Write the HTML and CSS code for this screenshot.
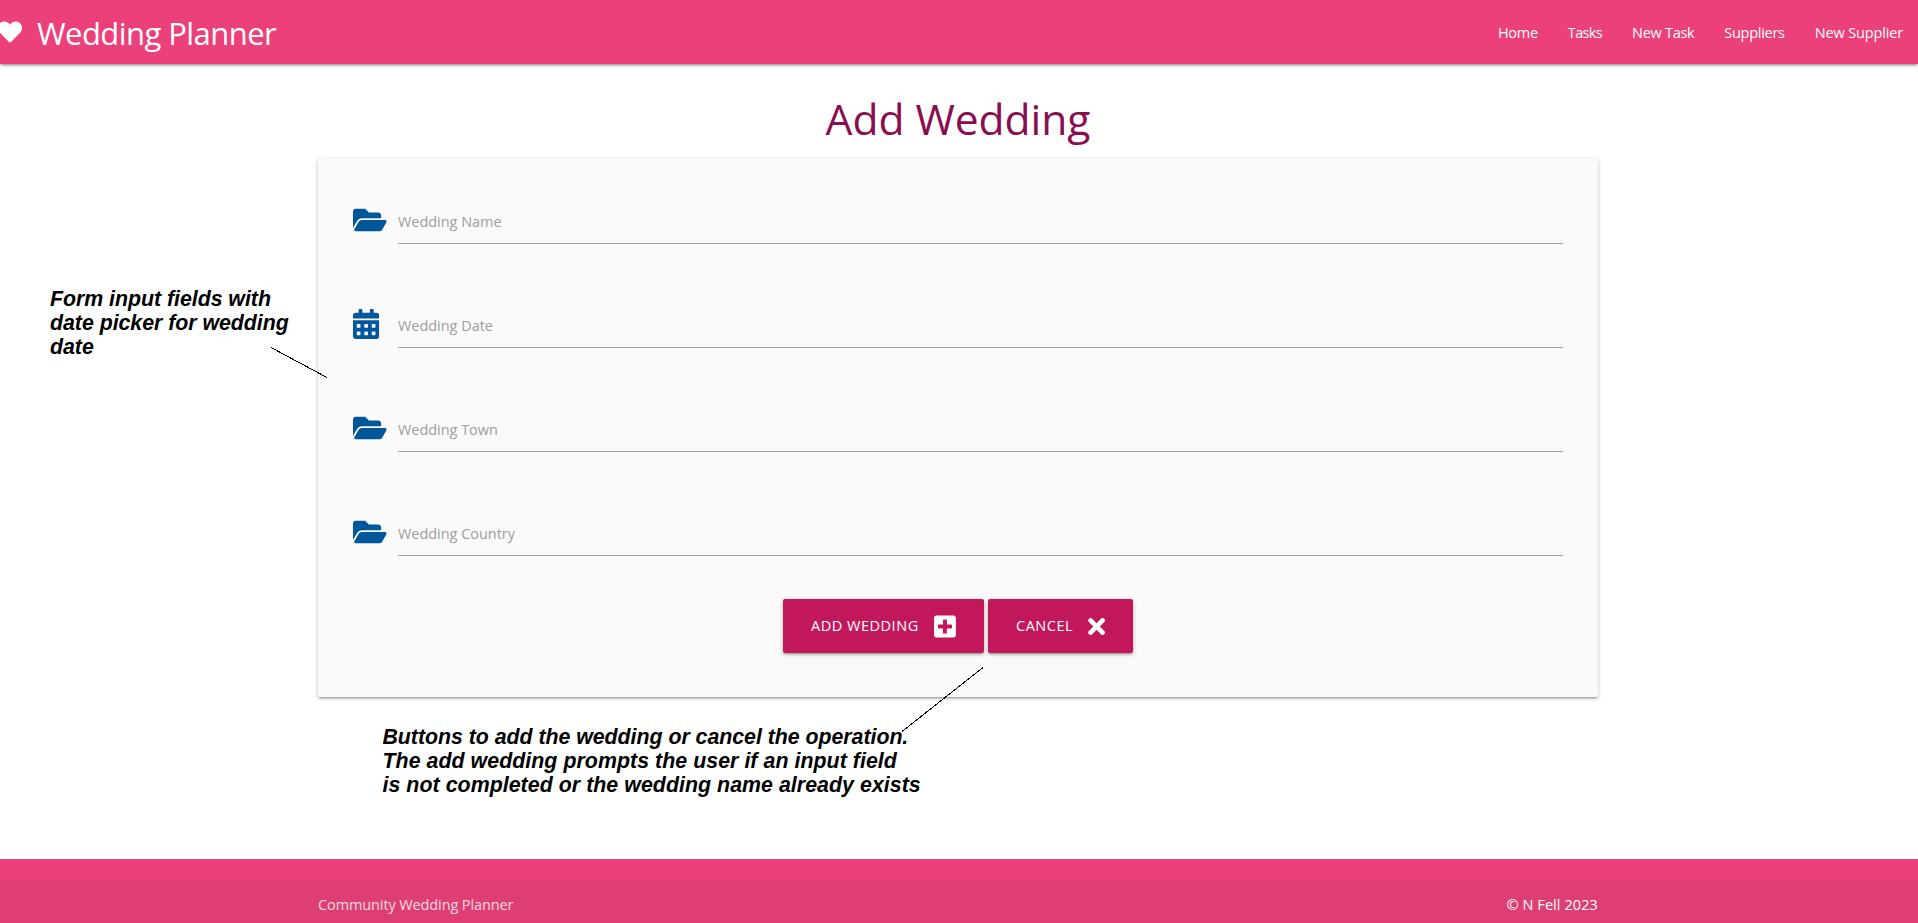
FILE: index.html
```html
<!DOCTYPE html>
<html lang="en">
<head>
<meta charset="utf-8">
<title>Wedding Planner</title>
<link rel="stylesheet" href="styles.css">
</head>
<body>
<svg class="sprite" aria-hidden="true">
  <symbol id="heart" viewBox="0 0 512 512"><path d="M462.3 62.6C407.5 15.9 326 24.3 275.7 76.2L256 96.5l-19.7-20.3C186.1 24.3 104.5 15.9 49.7 62.6c-62.8 53.6-66.1 149.8-9.9 207.9l193.5 199.8c12.5 12.9 32.8 12.9 45.3 0l193.5-199.8c56.3-58.1 53-154.3-9.8-207.9z"/></symbol>
  <symbol id="folder" viewBox="0 0 576 512"><path d="M572.694 292.093L500.27 416.248A63.997 63.997 0 0 1 444.989 448H45.025c-18.523 0-30.064-20.093-20.731-36.093l72.424-124.155A64 64 0 0 1 152 256h399.964c18.523 0 30.064 20.093 20.73 36.093zM152 224h328v-48c0-26.51-21.49-48-48-48H272l-64-64H48C21.49 64 0 85.49 0 112v278.046l69.077-118.418C86.214 242.25 117.989 224 152 224z"/></symbol>
  <symbol id="calendar" viewBox="0 0 448 512"><path fill-rule="evenodd" d="M0 464c0 26.5 21.5 48 48 48h352c26.5 0 48-21.5 48-48V192H0zM76 256h40q12 0 12 12v40q0 12-12 12H76q-12 0-12-12v-40q0-12 12-12zM204 256h40q12 0 12 12v40q0 12-12 12h-40q-12 0-12-12v-40q0-12 12-12zM332 256h40q12 0 12 12v40q0 12-12 12h-40q-12 0-12-12v-40q0-12 12-12zM76 384h40q12 0 12 12v40q0 12-12 12H76q-12 0-12-12v-40q0-12 12-12zM204 384h40q12 0 12 12v40q0 12-12 12h-40q-12 0-12-12v-40q0-12 12-12zM332 384h40q12 0 12 12v40q0 12-12 12h-40q-12 0-12-12v-40q0-12 12-12zM400 64h-48V16c0-8.800-7.200-16-16-16h-32c-8.800 0-16 7.200-16 16v48H160V16c0-8.800-7.200-16-16-16h-32c-8.800 0-16 7.200-16 16v48H48C21.500 64 0 85.500 0 112v48h448v-48c0-26.500-21.500-48-48-48z"/></symbol>
  <symbol id="plus" viewBox="0 0 448 512"><path d="M400 32H48C21.500 32 0 53.500 0 80v352c0 26.500 21.500 48 48 48h352c26.500 0 48-21.500 48-48V80c0-26.500-21.500-48-48-48zm-32 252c0 6.600-5.400 12-12 12h-92v92c0 6.600-5.400 12-12 12h-56c-6.600 0-12-5.400-12-12v-92H92c-6.600 0-12-5.400-12-12v-56c0-6.600 5.400-12 12-12h92v-92c0-6.600 5.400-12 12-12h56c6.600 0 12 5.400 12 12v92h92c6.600 0 12 5.400 12 12v56z"/></symbol>
  <symbol id="times" viewBox="0 0 352 512"><path d="M242.720 256l100.070-100.070c12.280-12.280 12.280-32.190 0-44.480l-22.240-22.240c-12.280-12.280-32.190-12.280-44.480 0L176 189.280 75.930 89.210c-12.280-12.280-32.190-12.280-44.480 0L9.210 111.450c-12.280 12.280-12.280 32.190 0 44.480L109.280 256 9.210 356.070c-12.280 12.280-12.280 32.190 0 44.480l22.240 22.240c12.280 12.280 32.200 12.280 44.480 0L176 322.720l100.070 100.070c12.280 12.280 32.200 12.280 44.480 0l22.240-22.240c12.280-12.280 12.280-32.190 0-44.480L242.720 256z"/></symbol>
</svg>

<nav class="navbar">
  <a class="brand"><svg class="brand-icon"><use href="#heart"/></svg><span>Wedding Planner</span></a>
  <ul class="links">
    <li>Home</li>
    <li class="tight">Tasks</li>
    <li>New Task</li>
    <li>Suppliers</li>
    <li class="wide">New Supplier</li>
  </ul>
</nav>

<main class="container">
  <h3 class="title">Add Wedding</h3>
  <form class="card">
    <div class="field"><svg class="prefix folder"><use href="#folder"/></svg><label class="input">Wedding Name</label></div>
    <div class="field"><svg class="prefix calendar"><use href="#calendar"/></svg><label class="input">Wedding Date</label></div>
    <div class="field"><svg class="prefix folder"><use href="#folder"/></svg><label class="input">Wedding Town</label></div>
    <div class="field"><svg class="prefix folder"><use href="#folder"/></svg><label class="input">Wedding Country</label></div>
    <div class="actions">
      <button type="button" class="btn btn-add"><span>ADD WEDDING</span><svg class="plus"><use href="#plus"/></svg></button>
      <button type="button" class="btn btn-cancel"><span>CANCEL</span><svg class="times"><use href="#times"/></svg></button>
    </div>
  </form>
</main>

<footer class="footer">
  <div class="copyright">
    <div class="container copyright-row"><span>Community Wedding Planner</span><span class="owner">© N Fell 2023</span></div>
  </div>
</footer>

<p class="note note-fields">Form input fields with<br>date picker for wedding<br>date</p>
<p class="note note-buttons">Buttons to add the wedding or cancel the operation.<br><span class="loose">The add wedding prompts the user if an input field<br>is not completed or the wedding name already exists</span></p>
<svg class="pointers" viewBox="0 0 1918 923" shape-rendering="crispEdges">
  <path d="M271 347.500L327 377.500M902 731.500L983 667.500"/>
</svg>
</body>
</html>
```

FILE: styles.css
```css
* { box-sizing: border-box; }
body {
  margin: 0;
  height: 923px;
  position: relative;
  display: flex;
  flex-direction: column;
  overflow: hidden;
  background: #fff;
  font: 14.5px/22px "Open Sans", "Noto Sans", sans-serif;
}
svg { display: block; fill: currentColor; flex: none; }
.sprite { position: absolute; width: 0; height: 0; }

.navbar {
  height: 64px;
  flex: none;
  display: flex;
  justify-content: space-between;
  align-items: center;
  color: #fff;
  background: #ec407a;
  box-shadow: 0 2px 2px 0 rgba(0,0,0,.14), 0 3px 1px -2px rgba(0,0,0,.12), 0 1px 5px 0 rgba(0,0,0,.2);
}
.brand { display: flex; align-items: center; gap: 15px; margin-left: -2px; font-size: 31px; line-height: 64px; letter-spacing: -.56px; }
.brand-icon { width: 24px; height: 24px; }
.brand span { padding-top: 2px; }
.links { display: flex; gap: 30px; margin: 0; padding: 2px 15px 0 0; list-style: none; letter-spacing: -.29px; }
.links .tight { letter-spacing: -.65px; }
.links .wide { letter-spacing: -.14px; }

.container { width: 1280px; margin-left: 318px; }
.title {
  height: 95px;
  margin: 0;
  padding-top: 25px;
  text-align: center;
  font-size: 42.600px;
  font-weight: 400;
  line-height: 58px;
  letter-spacing: -.06px;
  color: #880e4f;
}
.card {
  height: 538px;
  padding: 32px 35px 0;
  border-radius: 2px;
  background: #fafafa;
  box-shadow: 0 2px 2px 0 rgba(0,0,0,.14), 0 3px 1px -2px rgba(0,0,0,.12), 0 1px 5px 0 rgba(0,0,0,.2);
}
.field { display: flex; justify-content: space-between; height: 53px; margin-bottom: 51px; color: #01579b; }
.prefix { height: 30px; margin-left: .3px; }
.folder { width: 33.750px; margin-top: 14px; }
.calendar { width: 26.250px; margin-top: 14px; }
.input { width: 1165px; padding-top: 20px; border-bottom: 1px solid #9e9e9e; color: #9e9e9e; letter-spacing: -.04px; }

.actions { display: flex; justify-content: center; gap: 4px; margin-top: -8px; }
.btn {
  height: 54px;
  padding: 0 28px;
  display: flex;
  align-items: center;
  justify-content: space-between;
  border: 0;
  border-radius: 2px;
  background: #c2185b;
  color: #fff;
  font: inherit;
  letter-spacing: .52px;
  box-shadow: 0 2px 2px 0 rgba(0,0,0,.14), 0 3px 1px -2px rgba(0,0,0,.12), 0 1px 5px 0 rgba(0,0,0,.2);
}
.btn-add { width: 201px; }
.btn-cancel { width: 145px; }
.plus { width: 21.900px; height: 25px; }
.times { width: 17.200px; height: 25px; }

.footer { height: 64px; flex: none; margin-top: auto; padding-top: 20px; background: #ec407a; }
.copyright { height: 44px; background: rgba(51,51,51,.08); color: rgba(255,255,255,.8); }
.copyright-row { display: flex; justify-content: space-between; padding-top: 15px; letter-spacing: -.11px; }
.owner { color: #fff; letter-spacing: .09px; }

.note { position: absolute; margin: 0; font: italic bold 21.330px/24px "Liberation Sans", Arial, sans-serif; letter-spacing: -.03px; color: #000; white-space: nowrap; }
.note-fields { left: 50px; top: 287px; }
.note-buttons { left: 382.500px; top: 725px; }
.loose { letter-spacing: .05px; }
.pointers { position: absolute; left: 0; top: 0; width: 1918px; height: 923px; fill: none; stroke: #000; stroke-width: 1; pointer-events: none; }
```
